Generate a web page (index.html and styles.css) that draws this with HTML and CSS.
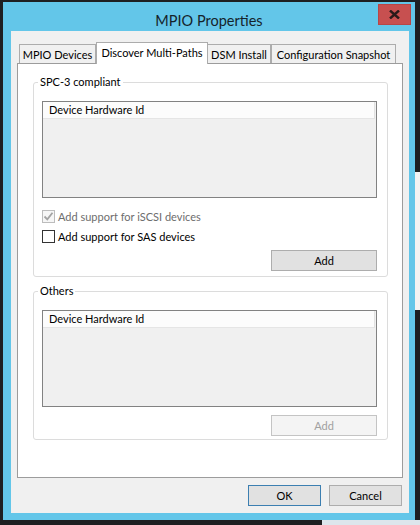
FILE: index.html
```html
<html>
<head>
<title>MPIO Properties</title>
<link rel="stylesheet" href="styles.css">
</head>
<body>

<div class="window">
  <div class="titlebar">
    <span></span>
    <div class="title">MPIO Properties</div>
    <div class="close-wrap">
      <div class="close">
        <svg width="11" height="9" viewBox="0 0 11 9"><path d="M1 0.5 L10 8.5 M10 0.5 L1 8.5" stroke="#2a1a1a" stroke-width="2.4" fill="none"/></svg>
      </div>
    </div>
  </div>

  <div class="client">
    <div class="tabs">
      <div class="tab tab-devices">MPIO Devices</div>
      <div class="tab tab-discover selected">Discover Multi-Paths</div>
      <div class="tab tab-dsm">DSM Install</div>
      <div class="tab tab-snapshot">Configuration Snapshot</div>
    </div>

    <div class="panel">
      <fieldset class="group group-spc">
        <legend>SPC-3 compliant</legend>
        <div class="listbox">
          <div class="list-header"><span class="col">Device Hardware Id</span></div>
        </div>
        <div class="check check-first disabled">
          <span class="box"><svg width="11" height="11" viewBox="0 0 11 11"><path d="M1.5 5.5 L4.3 8.3 L9.5 1.8" stroke="#a3a3a3" stroke-width="1.8" fill="none"/></svg></span>
          Add support for iSCSI devices
        </div>
        <div class="check">
          <span class="box"></span>
          Add support for SAS devices
        </div>
        <div class="actions"><button class="btn add">Add</button></div>
      </fieldset>

      <fieldset class="group group-others">
        <legend>Others</legend>
        <div class="listbox">
          <div class="list-header"><span class="col">Device Hardware Id</span></div>
        </div>
        <div class="actions actions-tight"><button class="btn add" disabled>Add</button></div>
      </fieldset>
    </div>

    <div class="footer">
      <button class="btn default">OK</button>
      <button class="btn">Cancel</button>
    </div>
  </div>
</div>

</body>
</html>
```

FILE: styles.css
```css
* {
  box-sizing:border-box;
}

html, body {
  margin:0;
}

body {
  width:420px;
  height:525px;
  overflow:hidden;
  /* bits of the windows behind the dialog */
  background:
    linear-gradient(#f2f2f2, #f2f2f2) right 0 top 172px / 5px 138px no-repeat,
    linear-gradient(#dde6ec, #dde6ec) right 0 bottom 0 / 98px 5px no-repeat,
    #1e1f21;
  font-family:Lato, "Noto Sans", sans-serif;
  font-size:11px;
  color:#000;
}

.window {
  margin:2px 0 0 3px;
  width:412px;
  height:518px;
  background:#63c6e9;
  display:flex;
  flex-direction:column;
}

.titlebar {
  height:29px;
  display:grid;
  grid-template-columns:1fr auto 1fr;
  align-items:start;
}

.title {
  margin-top:9px;
  font-size:14.5px;
  line-height:20px;
  color:#15232b;
}

.close-wrap {
  justify-self:end;
}

.close {
  width:33px;
  height:21px;
  margin:2px 4px 0 0;
  background:#c75050;
  border:1px solid #b84646;
  display:flex;
  align-items:center;
  justify-content:center;
}

.client {
  flex:1;
  margin:0 6px 7px 8px;
  background:#f0f0f0;
  padding:11px 6px 7px 6px;
  display:flex;
  flex-direction:column;
}

.tabs {
  height:21px;
  display:flex;
  align-items:flex-end;
  padding-left:2px;
}

.tab {
  height:19px;
  border:1px solid #acacac;
  border-bottom:none;
  background:#f0f0f0;
  display:flex;
  align-items:center;
  justify-content:center;
  white-space:nowrap;
}

.tab.selected {
  height:22px;
  margin-bottom:-1px;
  padding-bottom:2px;
  background:#fff;
  position:relative;
  z-index:1;
}

.tab-devices { width:77px; }
.tab-discover { width:112px; }
.tab-dsm { width:63px; border-left:none; }
.tab-snapshot { width:125px; }

.panel {
  flex:1;
  background:#fff;
  border:1px solid #9c9c9c;
  padding:10px 14px 0 15px;
}

.group {
  margin:0;
  min-width:0;
  border:1px solid #dcdcdc;
  border-radius:3px;
  padding:11px 10px 5px 8px;
}

.group legend {
  padding:0 2px;
  margin-left:-4px;
  line-height:16px;
}

.group-others {
  margin-top:6px;
  padding-bottom:3px;
}

.listbox {
  height:97px;
  border:1px solid #828282;
  background:#f0f0f0;
}

.list-header {
  height:17px;
  margin-right:1px;
  background:#fcfcfc;
  border-bottom:1px solid #e5e5e5;
  border-right:1px solid #e2e2e2;
  line-height:16px;
}

.list-header .col {
  padding-left:6px;
}

.check {
  height:13px;
  margin-top:7px;
  display:flex;
  align-items:center;
  white-space:nowrap;
}

.check-first {
  margin-top:12px;
}

.check .box {
  width:13px;
  height:13px;
  margin-right:3px;
  border:1px solid #333;
  background:#fff;
  display:flex;
  align-items:center;
  justify-content:center;
}

.check.disabled {
  color:#6d6d6d;
}

.check.disabled .box {
  border-color:#bcbcbc;
  background:#f6f6f6;
}

.actions {
  margin-top:7px;
  display:flex;
  justify-content:flex-end;
}

.actions-tight {
  margin-top:8px;
}

.btn {
  width:73px;
  height:21px;
  padding:0;
  font-family:inherit;
  font-size:11px;
  color:#000;
  background:#e1e1e1;
  border:1px solid #adadad;
}

.btn.add {
  width:106px;
}

.btn:disabled {
  color:#a0a0a0;
  background:#f4f4f4;
  border-color:#c4c4c4;
}

.btn.default {
  border-color:#3c7fb1;
}

.footer {
  margin:7px 1px 0 0;
  display:flex;
  justify-content:flex-end;
  gap:8px;
}
```
